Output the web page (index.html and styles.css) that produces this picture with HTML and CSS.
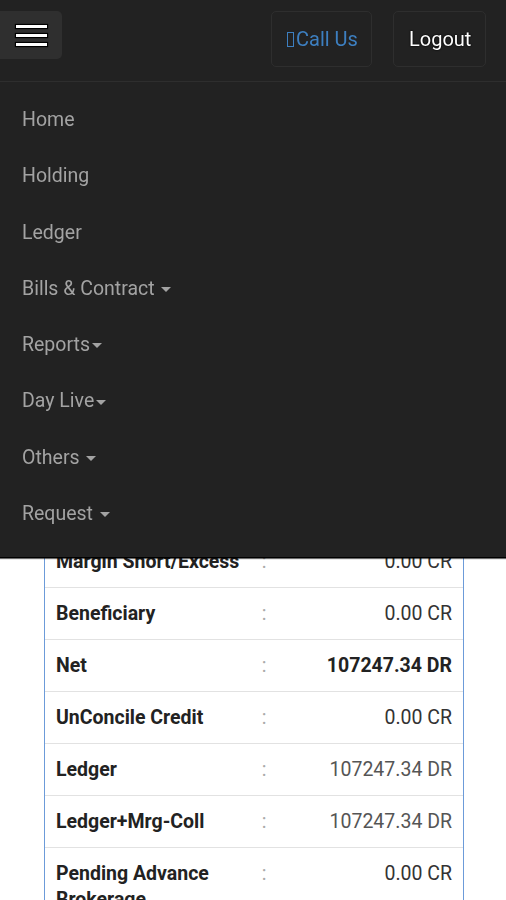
FILE: index.html
```html
<!DOCTYPE html>
<html lang="en">
<head>
<meta charset="UTF-8">
<meta name="viewport" content="width=device-width, initial-scale=1.0">
<title>Client Summary</title>
<link rel="stylesheet" href="styles.css">
</head>
<body>

<nav class="navbar">
    <div class="navbar-header">
        <button class="navbar-toggle" type="button">
            <span class="icon-bar"></span>
            <span class="icon-bar"></span>
            <span class="icon-bar"></span>
        </button>
        <div class="navbar-right">
            <a class="nav-btn call-btn" href="#"><span class="tofu"></span>Call Us</a>
            <a class="nav-btn logout-btn" href="#">Logout</a>
        </div>
    </div>
    <ul class="nav-menu">
        <li><a href="#">Home</a></li>
        <li><a href="#">Holding</a></li>
        <li><a href="#">Ledger</a></li>
        <li><a href="#">Bills &amp; Contract <span class="caret"></span></a></li>
        <li><a href="#">Reports<span class="caret"></span></a></li>
        <li><a href="#">Day Live<span class="caret"></span></a></li>
        <li><a href="#">Others <span class="caret"></span></a></li>
        <li><a href="#">Request <span class="caret"></span></a></li>
    </ul>
</nav>

<div class="main">
    <div class="summary">
        <div class="row"><span class="label">Opening Balance</span><span class="sep">:</span><span class="value">0.00 CR</span></div>
        <div class="row"><span class="label">Today Bill</span><span class="sep">:</span><span class="value">0.00 CR</span></div>
        <div class="row"><span class="label">Cash Margin</span><span class="sep">:</span><span class="value">0.00 CR</span></div>
        <div class="row"><span class="label">Collateral</span><span class="sep">:</span><span class="value">0.00 CR</span></div>
        <div class="row"><span class="label">Span Margin</span><span class="sep">:</span><span class="value">0.00 CR</span></div>
        <div class="row"><span class="label">Exposure Margin</span><span class="sep">:</span><span class="value">0.00 CR</span></div>
        <div class="row"><span class="label">Total Margin</span><span class="sep">:</span><span class="value">0.00 CR</span></div>
        <div class="row"><span class="label">Margin Used</span><span class="sep">:</span><span class="value">0.00 CR</span></div>
        <div class="row"><span class="label">Uncleared Cheque</span><span class="sep">:</span><span class="value">0.00 CR</span></div>
        <div class="row"><span class="label">Pool</span><span class="sep">:</span><span class="value">0.00 CR</span></div>
        <div class="row"><span class="label">Margin Short/Excess</span><span class="sep">:</span><span class="value">0.00 CR</span></div>
        <div class="row"><span class="label">Beneficiary</span><span class="sep">:</span><span class="value">0.00 CR</span></div>
        <div class="row"><span class="label">Net</span><span class="sep">:</span><span class="value strong">107247.34 DR</span></div>
        <div class="row"><span class="label">UnConcile Credit</span><span class="sep">:</span><span class="value">0.00 CR</span></div>
        <div class="row"><span class="label">Ledger</span><span class="sep">:</span><span class="value muted">107247.34 DR</span></div>
        <div class="row"><span class="label">Ledger+Mrg-Coll</span><span class="sep">:</span><span class="value muted">107247.34 DR</span></div>
        <div class="row"><span class="label">Pending Advance Brokerage</span><span class="sep">:</span><span class="value">0.00 CR</span></div>
    </div>
</div>

</body>
</html>
```

FILE: styles.css
```css
body {
    margin: 0;
    font-family: Roboto, "Liberation Sans", Arial, sans-serif;
    background-color: #fff;
    color: #222;
}
a {
    text-decoration: none;
}

/* top bar, fixed over the page */
.navbar {
    position: fixed;
    top: 0;
    left: 0;
    right: 0;
    z-index: 10;
    background-color: #222;
    box-shadow: 0 1px 1px #000, 0 2px 1px rgba(0, 0, 0, 0.5);
}
.navbar-header {
    display: flex;
    justify-content: space-between;
    align-items: flex-start;
    height: 82px;
    padding-top: 11px;
    box-sizing: border-box;
    border-bottom: 1px solid #2e2e2e;
}
.navbar-toggle {
    display: flex;
    flex-direction: column;
    justify-content: center;
    gap: 6px;
    width: 62px;
    height: 48px;
    padding: 0 15px 0 16px;
    border: 0;
    border-radius: 0 5px 5px 0;
    background-color: #2f2f2f;
}
.icon-bar {
    display: block;
    height: 3px;
    background-color: #fff;
    box-shadow: 0 0 1px 1px #000;
}
.navbar-right {
    display: flex;
    gap: 21px;
    padding-right: 20px;
}
.nav-btn {
    display: flex;
    align-items: center;
    height: 56px;
    padding: 0 6px 0 14px;
    box-sizing: border-box;
    border: 1px solid #2e2e2e;
    border-radius: 5px;
    font-size: 20px;
    white-space: nowrap;
}
.call-btn {
    width: 101px;
    color: #3d7fc0;
}
.tofu {
    display: inline-block;
    width: 5px;
    height: 13px;
    margin: 0 2px 0 1px;
    border: 1px solid #3d7fc0;
}
.logout-btn {
    width: 93px;
    padding-left: 15px;
    color: #fff;
    text-shadow: 0 0 2px #000, 0 0 1px #000;
}

.nav-menu {
    list-style: none;
    margin: 0;
    padding: 10px 0 15px;
}
.nav-menu a {
    display: block;
    padding: 15px 22px;
    line-height: 26.25px;
    font-size: 19.5px;
    color: #a3a3a3;
}
.caret {
    display: inline-block;
    vertical-align: middle;
    margin-left: 2px;
    border-top: 5px solid #a3a3a3;
    border-left: 5px solid transparent;
    border-right: 5px solid transparent;
}

/* account summary */
.main {
    padding: 14px 42px 0 44px;
}
.summary {
    border: 1px solid #6c9bd9;
    border-bottom: 0;
}
.row {
    display: grid;
    grid-template-columns: 196px 24px 1fr;
    align-items: start;
    padding: 13px 11px 12px 11px;
    border-top: 1px solid #e2e2e2;
    font-size: 19.5px;
    line-height: 26px;
}
.label {
    font-weight: bold;
    color: #222;
}
.sep {
    text-align: center;
    color: #aaa;
}
.value {
    text-align: right;
    color: #333;
}
.value.strong {
    font-weight: bold;
    color: #222;
}
.value.muted {
    color: #555;
}
```
